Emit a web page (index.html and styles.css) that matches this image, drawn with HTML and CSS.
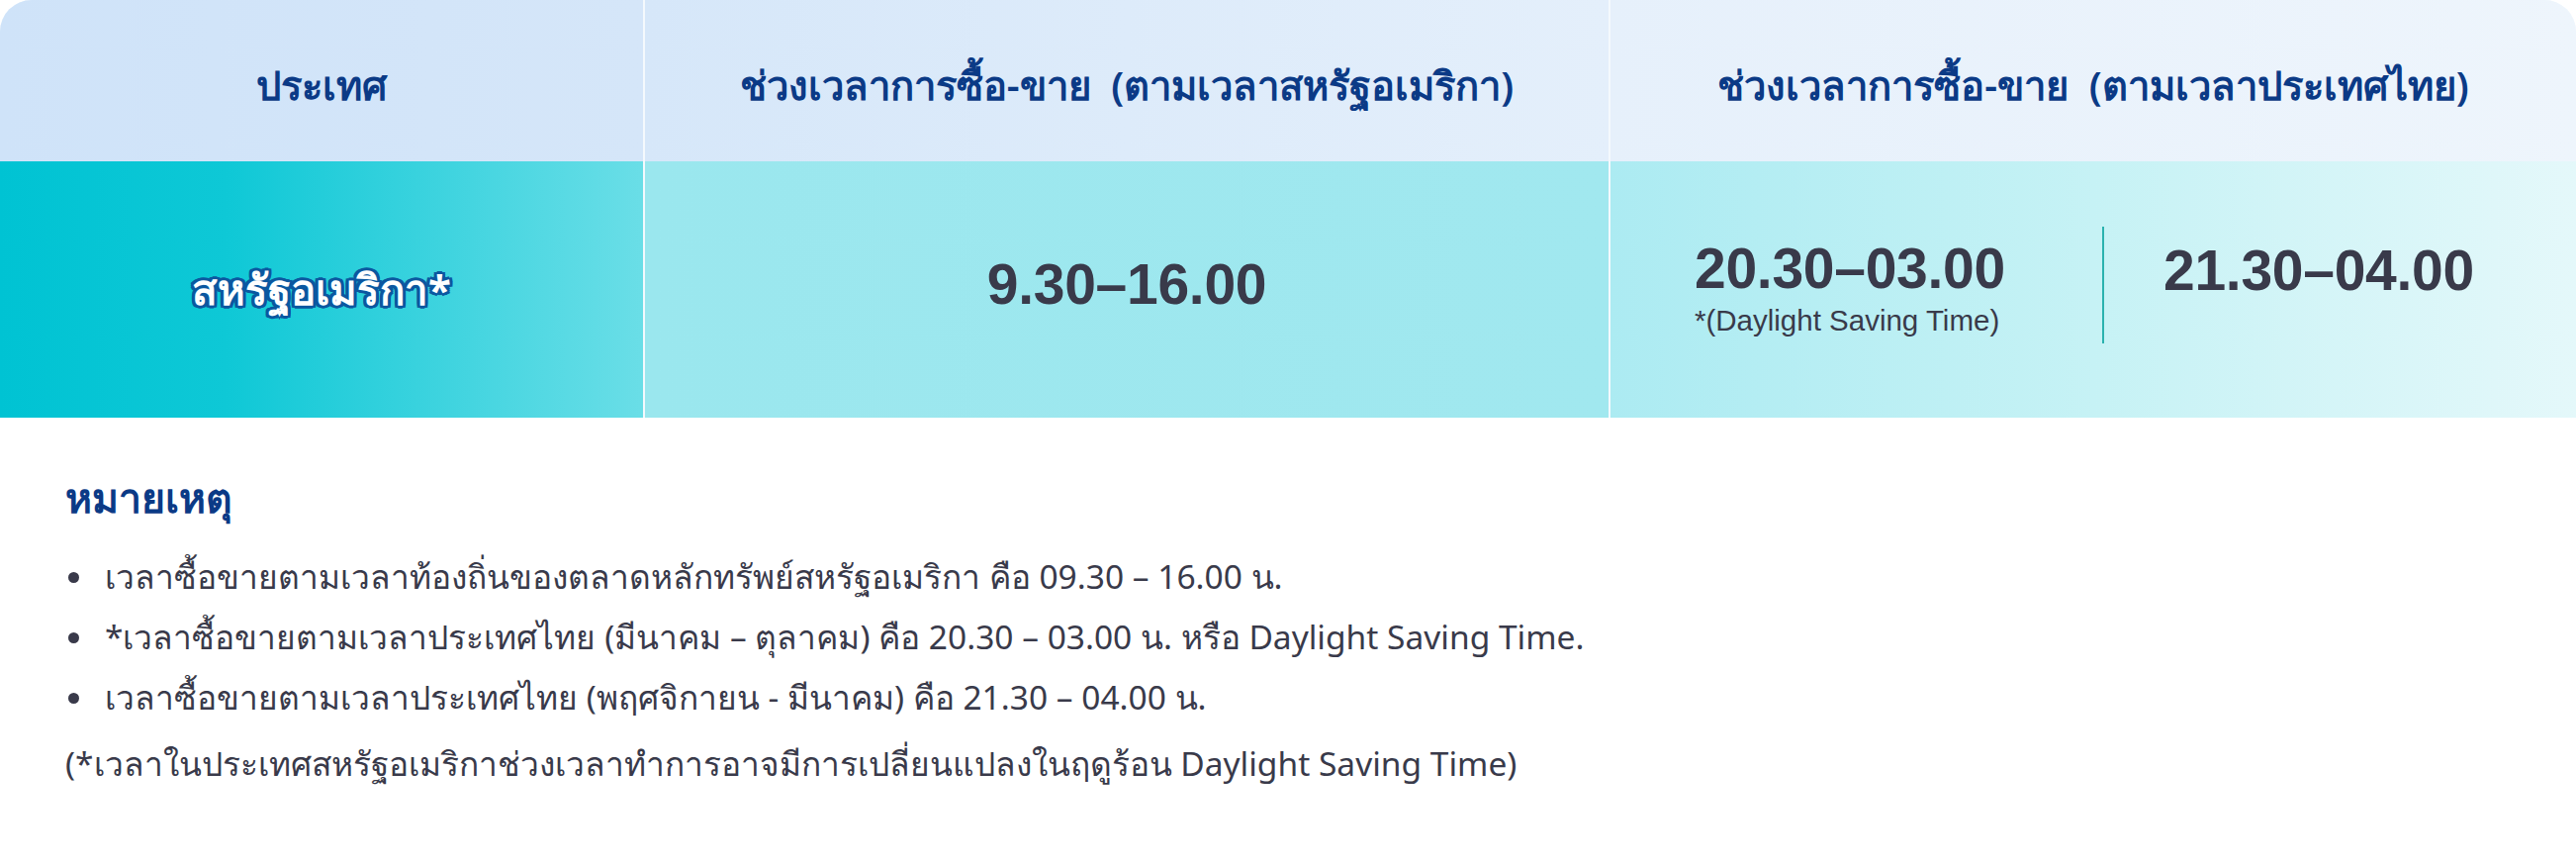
FILE: index.html
```html
<!DOCTYPE html>
<html lang="th">
<head>
<meta charset="utf-8">
<title>ช่วงเวลาการซื้อ-ขาย</title>
<link rel="stylesheet" href="styles.css">
</head>
<body>
<div class="page">
  <div class="table">
    <div class="th th-1">ประเทศ</div>
    <div class="th th-2">ช่วงเวลาการซื้อ-ขาย&nbsp; (ตามเวลาสหรัฐอเมริกา)</div>
    <div class="th th-3">ช่วงเวลาการซื้อ-ขาย&nbsp; (ตามเวลาประเทศไทย)</div>

    <div class="td td-country"><span class="country">สหรัฐอเมริกา*</span></div>
    <div class="td td-us"><span class="time">9.30–16.00</span></div>
    <div class="td td-th">
      <div class="split">
        <div class="split-left">
          <div class="time">20.30–03.00</div>
          <div class="dst">*(Daylight Saving Time)</div>
        </div>
        <div class="split-line"></div>
        <div class="split-right">
          <div class="time">21.30–04.00</div>
        </div>
      </div>
    </div>
  </div>

  <div class="notes">
    <h3 class="notes-title">หมายเหตุ</h3>
    <ul class="notes-list">
      <li>เวลาซื้อขายตามเวลาท้องถิ่นของตลาดหลักทรัพย์สหรัฐอเมริกา คือ 09.30 – 16.00 น.</li>
      <li>*เวลาซื้อขายตามเวลาประเทศไทย (มีนาคม – ตุลาคม) คือ 20.30 – 03.00 น. หรือ Daylight Saving Time.</li>
      <li>เวลาซื้อขายตามเวลาประเทศไทย (พฤศจิกายน - มีนาคม) คือ 21.30 – 04.00 น.</li>
    </ul>
    <p class="notes-foot">(*เวลาในประเทศสหรัฐอเมริกาช่วงเวลาทำการอาจมีการเปลี่ยนแปลงในฤดูร้อน Daylight Saving Time)</p>
  </div>
</div>
</body>
</html>
```

FILE: styles.css
```css
html, body {
  margin: 0;
  padding: 0;
  background: #ffffff;
}

body {
  font-family: "Noto Sans", "Liberation Sans", sans-serif;
  color: #393a4a;
}

.page {
  width: 2604px;
}

.table {
  display: grid;
  grid-template-columns: 650px 974px 1fr;
  grid-template-rows: 163px 259px;
  column-gap: 2px;
  background: #f4f9fd;
  border-radius: 32px 32px 0 0;
  overflow: hidden;
}

.th {
  display: flex;
  align-items: center;
  justify-content: center;
  color: #0b3a86;
  font-size: 40px;
  font-weight: 600;
  padding-top: 10px;
}

.th-1 { background: linear-gradient(90deg, #cfe3f9, #d5e6f9); }
.th-2 { background: linear-gradient(90deg, #d6e7f9, #e4effb); }
.th-3 { background: linear-gradient(90deg, #e6f0fb, #eef5fc); }

.td {
  display: flex;
  align-items: center;
  justify-content: center;
}

.td-country {
  background: linear-gradient(90deg, #00c3d3 0%, #0ec8d6 35%, #6adee7 100%);
}

.td-us {
  background: linear-gradient(90deg, #9ae7ee, #a1e8ef);
}

.td-th {
  background: linear-gradient(90deg, #acebf2 0%, #c6f2f5 50%, #e4f8fa 100%);
  justify-content: flex-start;
}

.country {
  color: #ffffff;
  font-size: 42px;
  font-weight: 700;
  text-shadow:
    3px 0 0 #0b57a0, -3px 0 0 #0b57a0, 0 3px 0 #0b57a0, 0 -3px 0 #0b57a0,
    2px 2px 0 #0b57a0, -2px 2px 0 #0b57a0, 2px -2px 0 #0b57a0, -2px -2px 0 #0b57a0,
    3px 2px 0 #0b57a0, -3px 2px 0 #0b57a0, 3px -2px 0 #0b57a0, -3px -2px 0 #0b57a0;
}

.time {
  font-family: "Liberation Sans", Arial, sans-serif;
  font-weight: 700;
  font-size: 57px;
  letter-spacing: -0.005em;
  line-height: 1;
  color: #393a4a;
}

.td-us .time {
  padding-bottom: 10px;
}

.split {
  display: flex;
  align-items: flex-start;
  height: 118px;
  margin-top: -9px;
}

.split-left {
  width: 412px;
  padding-left: 85px;
  padding-top: 14px;
}

.split-line {
  width: 2px;
  height: 118px;
  background: #2ab2ae;
}

.split-right {
  padding-left: 60px;
  padding-top: 16px;
}

.dst {
  font-family: "Liberation Sans", Arial, sans-serif;
  font-size: 29.5px;
  margin-top: 7px;
  color: #393a4a;
}

.notes {
  padding: 50px 0 0 66px;
}

.notes-title {
  margin: 0 0 20px;
  font-size: 41px;
  font-weight: 700;
  color: #0b3a86;
  line-height: 60px;
}

.notes-list {
  margin: 0;
  padding: 0;
  list-style: none;
}

.notes-list li {
  position: relative;
  padding-left: 40px;
  font-size: 33.5px;
  line-height: 61px;
}

.notes-list li::before {
  content: "";
  position: absolute;
  left: 3px;
  top: 26px;
  width: 11px;
  height: 11px;
  border-radius: 50%;
  background: #393a4a;
}

.notes-foot {
  margin: 6px 0 0;
  font-size: 33.5px;
  line-height: 61px;
}
```
